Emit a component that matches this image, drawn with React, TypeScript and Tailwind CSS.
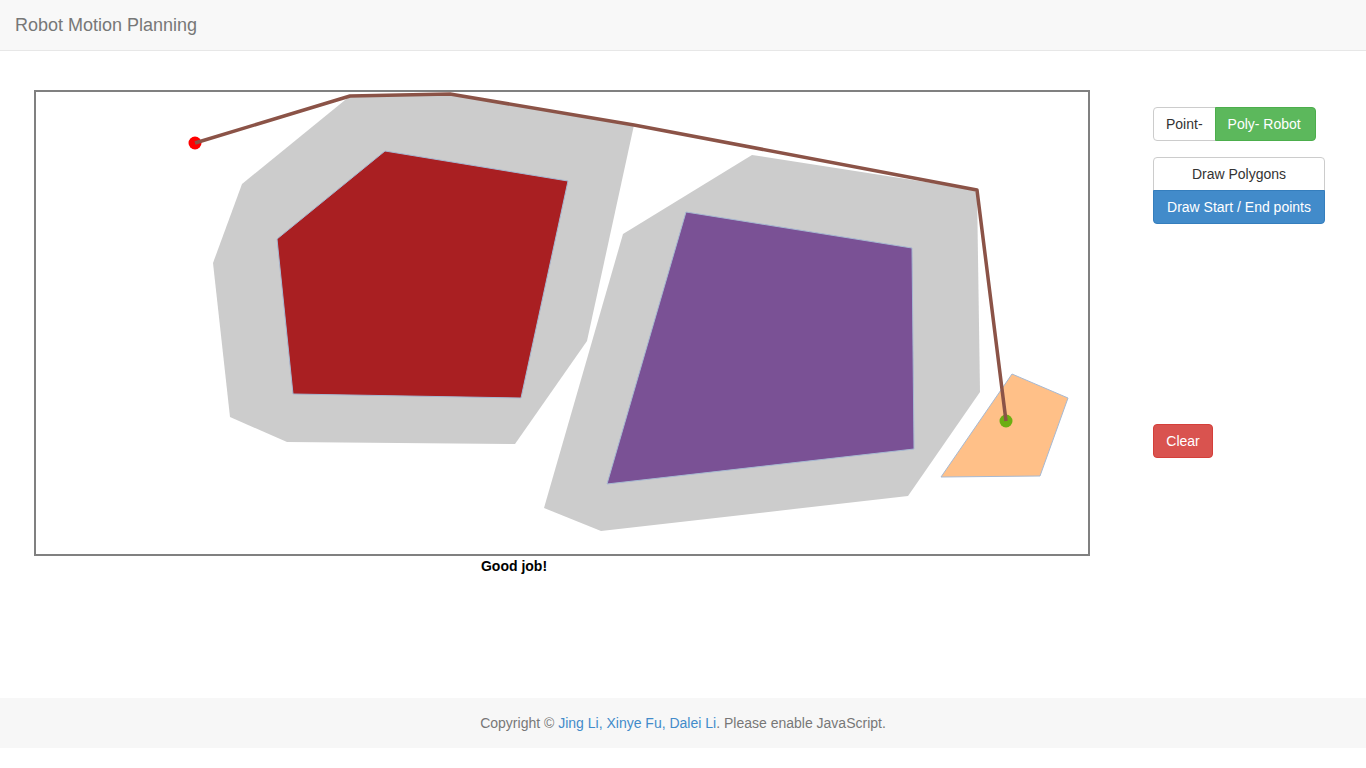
import React from "react";

type Pt = [number, number];

const toPoints = (pts: Pt[]) => pts.map((p) => p.join(",")).join(" ");

const grownShapes: Pt[][] = [
  [[242, 184], [350, 96], [448, 93], [634, 125], [587, 341], [515, 444], [287, 442], [230, 417], [213, 263]],
  [[752, 155], [977, 190], [980, 392], [908, 496], [601, 531], [544, 508], [623, 234]],
];

const obstacles: { fill: string; pts: Pt[] }[] = [
  { fill: "#a91f22", pts: [[385, 151], [568, 181], [521, 398], [293, 394], [277, 239]] },
  { fill: "#7a5195", pts: [[686, 212], [912, 248], [914, 449], [607, 484]] },
  { fill: "#ffc088", pts: [[1012, 374], [1068, 398], [1040, 476], [941, 477]] },
];

const path: Pt[] = [[195, 143], [350, 96], [450, 94], [634, 125], [977, 190], [1006, 421]];

const Canvas: React.FC = () => (
  <div className="w-[1056px] h-[466px] border-2 border-[#808080] bg-white">
    <svg width={1052} height={462} viewBox="36 92 1052 462" className="block">
      {grownShapes.map((pts, i) => (
        <polygon key={i} points={toPoints(pts)} fill="#cccccc" />
      ))}
      {obstacles.map((o, i) => (
        <polygon key={i} points={toPoints(o.pts)} fill={o.fill} stroke="#a7b9d2" strokeWidth={1} />
      ))}
      <circle cx={195} cy={143} r={6.5} fill="#ff0000" />
      <circle cx={1006} cy={421} r={6.5} fill="#6cae12" />
      <polyline points={toPoints(path)} fill="none" stroke="#8b5347" strokeWidth={3.5} strokeLinejoin="round" />
    </svg>
  </div>
);

export default function App() {
  return (
    <div className="min-h-[768px] bg-white font-['Liberation_Sans',Arial,sans-serif] text-[14px] text-[#333]">
      <nav className="h-[51px] bg-[#f8f8f8] border-b border-[#e7e7e7] px-[15px] flex items-center">
        <span className="text-[18px] text-[#777]">Robot Motion Planning</span>
      </nav>

      <main className="flex h-[647px] pt-[39px]">
        <div className="pl-[34px]">
          <Canvas />
          <div className="w-[960px] text-center font-bold leading-5 text-black">Good job!</div>
        </div>

        <div className="ml-[63px] pt-[17px] flex flex-col items-start">
          <div className="flex h-[34px]">
            <button className="h-full px-3 bg-white border border-[#ccc] rounded-l-[4px] text-[#333]">Point-</button>
            <button className="h-full pl-3 pr-[14px] bg-[#5cb85c] border border-[#4cae4c] rounded-r-[4px] text-white -ml-px">
              Poly- Robot
            </button>
          </div>

          <div className="mt-4 w-[172px] flex flex-col">
            <button className="h-[34px] bg-white border border-[#ccc] rounded-t-[4px] text-[#333]">Draw Polygons</button>
            <button className="h-[34px] -mt-px bg-[#428bca] border border-[#357ebd] rounded-b-[4px] text-white">
              Draw Start / End points
            </button>
          </div>

          <button className="mt-[200px] h-[34px] w-[60px] bg-[#d9534f] border border-[#d43f3a] rounded-[4px] text-white">
            Clear
          </button>
        </div>
      </main>

      <footer className="h-[50px] bg-[#f7f7f7] flex items-center justify-center text-[#777]">
        <span>
          Copyright © <a className="text-[#428bca]">Jing Li, Xinye Fu, Dalei Li</a>. Please enable JavaScript.
        </span>
      </footer>
    </div>
  );
}
